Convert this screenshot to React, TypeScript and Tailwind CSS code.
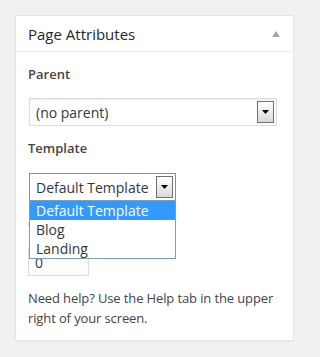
import React from "react";

function SelectArrow() {
  return (
    <div className="mr-[2px] flex h-[22px] w-[17px] shrink-0 items-center justify-center border border-[#707070] bg-gradient-to-b from-white to-[#d9d9d9]">
      <svg width="7" height="4" viewBox="0 0 7 4" className="-mt-[1px]">
        <polygon points="0,0 7,0 3.5,4" fill="#000" />
      </svg>
    </div>
  );
}

export default function App() {
  const templates = ["Default Template", "Blog", "Landing"];

  return (
    <div className="min-h-screen bg-[#f1f1f1] pl-[15px] pt-[15px] font-['Open_Sans',sans-serif]">
      <div className="w-[279px] border border-[#e5e5e5] bg-white shadow-[0_1px_1px_rgba(0,0,0,0.04)]">
        {/* Header */}
        <div className="box-border flex h-[36px] items-center justify-between border-b border-[#eeeeee] px-[12px]">
          <h2 className="text-[15px] leading-[20px] text-[#23282d]">Page Attributes</h2>
          <svg width="8" height="6" viewBox="0 0 8 6" className="mr-[1px]">
            <polygon points="0,6 4,0 8,6" fill="#a0a5aa" />
          </svg>
        </div>

        {/* Body */}
        <div className="px-[12px] pb-[12px]">
          <p className="mt-[13px] text-[13px] font-semibold leading-[18px] text-[#444]">Parent</p>
          <div className="ml-[1px] mt-[15px] box-border flex h-[28px] w-[248px] items-center border border-[#dddddd] bg-white pl-[6px] shadow-[inset_0_1px_2px_rgba(0,0,0,0.07)]">
            <span className="flex-1 text-[14px] leading-[19px] text-[#32373c]">(no parent)</span>
            <SelectArrow />
          </div>

          <p className="mt-[13px] text-[13px] font-semibold leading-[18px] text-[#444]">Template</p>
          <div className="relative ml-[1px] mt-[16px] w-[147px]">
            <div className="box-border flex h-[28px] w-[147px] items-center border border-[#8c8c8c] bg-white pl-[6px]">
              <span className="flex-1 whitespace-nowrap text-[14px] leading-[19px] text-[#32373c]">Default Template</span>
              <SelectArrow />
            </div>
            {/* Open dropdown list */}
            <ul className="absolute left-0 top-[27px] z-10 w-[147px] border border-[#7f9db9] bg-white">
              {templates.map((t, i) => (
                <li
                  key={t}
                  className={`h-[19px] whitespace-nowrap pl-[6px] text-[14px] leading-[19px] ${
                    i === 0 ? "bg-[#3399ff] text-white" : "text-[#32373c]"
                  }`}
                >
                  {t}
                </li>
              ))}
            </ul>
          </div>

          <p className="mt-[14px] text-[13px] font-semibold leading-[18px] text-[#444]">Order</p>
          <div className="mt-[15px] box-border flex h-[28px] w-[61px] items-center border border-[#dddddd] pl-[6px] text-[14px] text-[#32373c] shadow-[inset_0_1px_2px_rgba(0,0,0,0.07)]">
            0
          </div>

          <p className="mt-[12px] text-[13px] leading-[20px] tracking-[-0.12px] text-[#444]">
            Need help? Use the Help tab in the upper right of your screen.
          </p>
        </div>
      </div>
    </div>
  );
}
